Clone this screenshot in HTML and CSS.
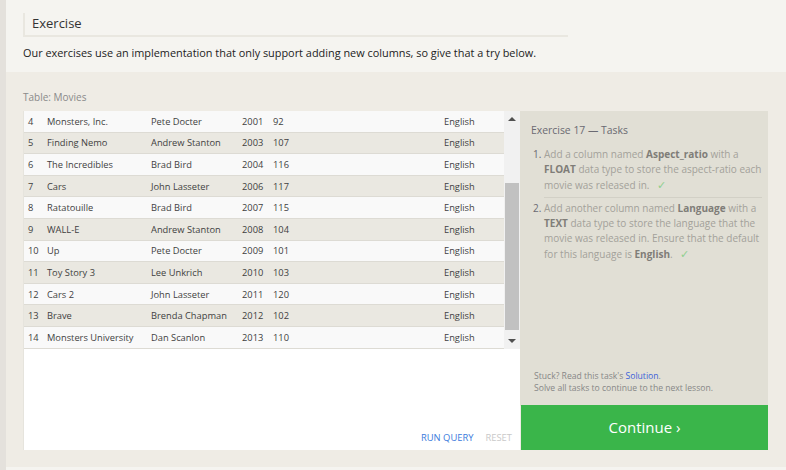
FILE: index.html
```html
<!DOCTYPE html>
<html>
<head>
<meta charset="utf-8">
<link rel="stylesheet" href="styles.css">
</head>
<body>
<div class="page">
  <div class="strip"></div>
  <div class="main">
    <section class="intro">
      <div class="title-box"><h2>Exercise</h2></div>
      <p class="lead">Our exercises use an implementation that only support adding new columns, so give that a try below.</p>
    </section>
    <section class="workspace">
      <div class="caption">Table: Movies</div>
      <div class="panes">
        <div class="table-box">
          <div class="rows-wrap">
            <div class="rows">
              <div class="row"><span>4</span><span>Monsters, Inc.</span><span>Pete Docter</span><span>2001</span><span>92</span><span>English</span></div>
              <div class="row alt"><span>5</span><span>Finding Nemo</span><span>Andrew Stanton</span><span>2003</span><span>107</span><span>English</span></div>
              <div class="row"><span>6</span><span>The Incredibles</span><span>Brad Bird</span><span>2004</span><span>116</span><span>English</span></div>
              <div class="row alt"><span>7</span><span>Cars</span><span>John Lasseter</span><span>2006</span><span>117</span><span>English</span></div>
              <div class="row"><span>8</span><span>Ratatouille</span><span>Brad Bird</span><span>2007</span><span>115</span><span>English</span></div>
              <div class="row alt"><span>9</span><span>WALL-E</span><span>Andrew Stanton</span><span>2008</span><span>104</span><span>English</span></div>
              <div class="row"><span>10</span><span>Up</span><span>Pete Docter</span><span>2009</span><span>101</span><span>English</span></div>
              <div class="row alt"><span>11</span><span>Toy Story 3</span><span>Lee Unkrich</span><span>2010</span><span>103</span><span>English</span></div>
              <div class="row"><span>12</span><span>Cars 2</span><span>John Lasseter</span><span>2011</span><span>120</span><span>English</span></div>
              <div class="row alt"><span>13</span><span>Brave</span><span>Brenda Chapman</span><span>2012</span><span>102</span><span>English</span></div>
              <div class="row"><span>14</span><span>Monsters University</span><span>Dan Scanlon</span><span>2013</span><span>110</span><span>English</span></div>
            </div>
            <div class="scrollbar">
              <div class="arrow up"></div>
              <div class="track"><div class="thumb"></div></div>
              <div class="arrow down"></div>
            </div>
          </div>
          <div class="actions">
            <span class="run">RUN QUERY</span>
            <span class="reset">RESET</span>
          </div>
        </div>
        <aside class="tasks">
          <div class="tasks-body">
            <h3>Exercise 17 — Tasks</h3>
            <ol>
              <li>Add a column named <b>Aspect_ratio</b> with a <b>FLOAT</b> data type to store the aspect-ratio each movie was released in. <span class="check">✓</span></li>
              <li>Add another column named <b>Language</b> with a <b>TEXT</b> data type to store the language that the movie was released in. Ensure that the default for this language is <b>English</b>. <span class="check">✓</span></li>
            </ol>
            <div class="stuck">
              <div>Stuck? Read this task's <span class="link">Solution</span>.</div>
              <div>Solve all tasks to continue to the next lesson.</div>
            </div>
          </div>
          <div class="continue">Continue ›</div>
        </aside>
      </div>
    </section>
    <div class="foot"></div>
  </div>
</div>
</body>
</html>
```

FILE: styles.css
```css
* { box-sizing: border-box; }
html, body { margin: 0; padding: 0; }
body {
  font-family: "Open Sans", "Noto Sans", sans-serif;
  background: #efece5;
  width: 786px;
  height: 470px;
  overflow: hidden;
}
.page { display: flex; height: 470px; }
.strip { width: 6px; background: #e4e1dc; flex: none; }
.main { flex: 1; display: flex; flex-direction: column; }

.intro {
  background: #f5f4f0;
  height: 72px;
  padding: 13px 0 0 17px;
}
.title-box {
  width: 545px;
  height: 24px;
  border-left: 2px solid #e9e7e0;
  border-bottom: 2px solid #e9e7e0;
  padding-left: 7px;
}
.title-box h2 {
  margin: 0;
  font-weight: 400;
  font-size: 13px;
  line-height: 20px;
  color: #333;
}
.lead {
  margin: 8px 0 0;
  font-size: 10.9px;
  line-height: 16px;
  color: #222;
}

.workspace {
  flex: 1;
  padding: 17px 18px 0 17px;
  display: flex;
  flex-direction: column;
}
.caption {
  font-size: 10px;
  color: #8a8a8a;
  line-height: 16px;
  height: 22px;
}
.panes {
  display: flex;
  height: 339px;
}
.table-box {
  width: 497px;
  background: #fff;
  border-left: 1px solid #e6e4dd;
  display: flex;
  flex-direction: column;
}
.rows-wrap {
  display: flex;
  height: 238px;
}
.rows { flex: 1; }
.row {
  display: grid;
  grid-template-columns: 19px 104px 91px 31px 171px auto;
  padding-left: 4px;
  height: 21.6px;
  align-items: center;
  border-bottom: 1px solid #dddbd4;
  background: #f9f9f9;
  font-size: 9.3px;
  color: #3f3f3f;
  white-space: nowrap;
}
.row.alt { background: #eae8e1; }

.scrollbar {
  width: 16px;
  background: #f1f1f1;
  display: flex;
  flex-direction: column;
}
.arrow { height: 16px; position: relative; }
.arrow::after {
  content: "";
  position: absolute;
  left: 4px;
  border-left: 4px solid transparent;
  border-right: 4px solid transparent;
}
.arrow.up::after { top: 6px; border-bottom: 4px solid #505050; }
.arrow.down::after { top: 6px; border-top: 4px solid #505050; }
.track { flex: 1; padding-top: 56px; }
.thumb { height: 147px; background: #c1c1c1; margin: 0 1px; }

.actions {
  margin-top: auto;
  display: flex;
  justify-content: flex-end;
  gap: 12px;
  padding: 0 8px 6px 0;
  font-size: 9.4px;
  line-height: 12px;
}
.run { color: #3a7bdc; }
.reset { color: #c9c9c9; }

.tasks {
  width: 248px;
  display: flex;
  flex-direction: column;
}
.tasks-body {
  flex: 1;
  background: #e1dfd5;
  padding: 12px 6px 0 11px;
  display: flex;
  flex-direction: column;
}
.tasks h3 {
  margin: 0;
  font-weight: 400;
  font-size: 10.4px;
  line-height: 15px;
  color: #6a6a72;
}
.tasks ol {
  margin: 9px 0 0;
  padding-left: 13px;
  font-size: 10px;
  line-height: 15px;
  color: #a3a19a;
}
.tasks li::marker { color: #6a6a72; }
.tasks li + li {
  border-top: 1px solid #d2d0c6;
  margin-top: 4px;
  padding-top: 3px;
}
.tasks b { color: #7f7d78; font-weight: 700; }
.check { color: #8fcf8f; margin-left: 5px; font-size: 11px; }
.stuck {
  margin-top: auto;
  padding-bottom: 12px;
  font-size: 8.6px;
  line-height: 12px;
  color: #878787;
  padding-left: 3px;
}
.link { color: #3b5fd9; }
.continue {
  height: 45px;
  margin-top: -1px;
  background: #3ab54a;
  color: #fff;
  font-size: 15px;
  display: flex;
  align-items: center;
  justify-content: center;
  margin-left: 1px;
  padding-bottom: 2px;
}
.foot { height: 3px; background: #f5f4f0; }
```
